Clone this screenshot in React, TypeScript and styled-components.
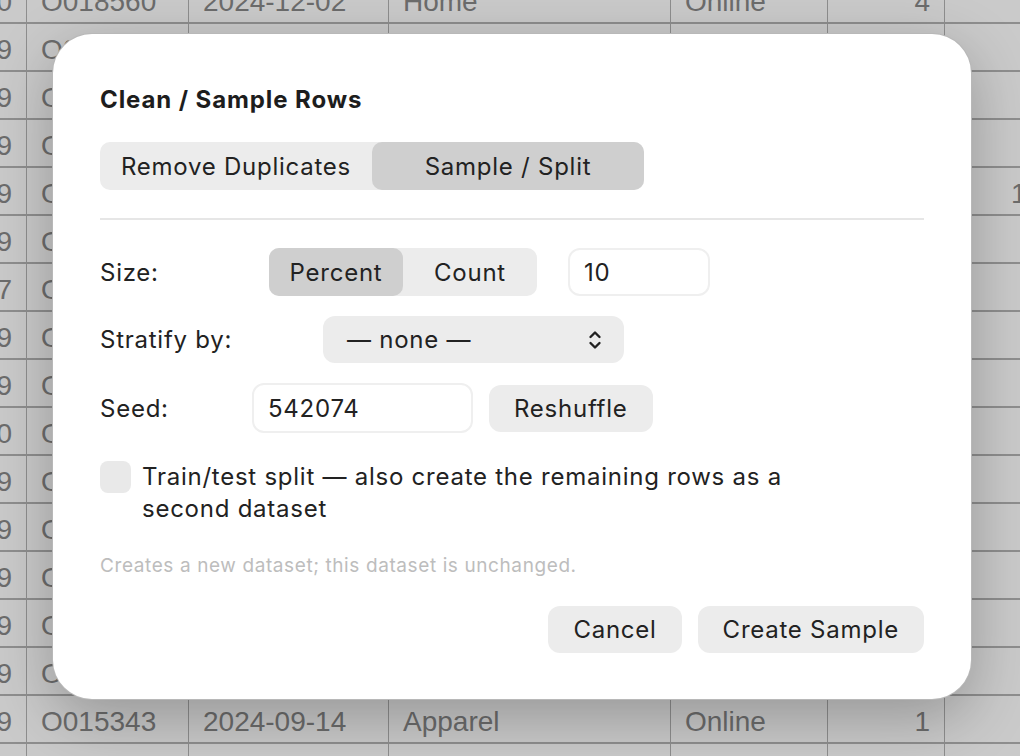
import React from "react";
import styled, { createGlobalStyle } from "styled-components";

const GlobalStyle = createGlobalStyle`
  html, body {
    margin: 0;
    padding: 0;
    height: 100%;
    overflow: hidden;
  }
  body {
    background: #cacaca;
    font-family: Inter, "Noto Sans", sans-serif;
    -webkit-font-smoothing: antialiased;
  }
`;

const Page = styled.div`
  position: relative;
  width: 1020px;
  height: 756px;
  overflow: hidden;
  background: #cacaca;
`;

/* spreadsheet behind the dialog */

const Sheet = styled.div`
  margin: -24px 0 0 -40px;
  font-family: "Liberation Sans", Arial, sans-serif;
  font-size: 28px;
  color: #6c6c6c;
`;

const SheetRow = styled.div`
  display: grid;
  grid-template-columns: 67px 162px 200px 282px 157px 117px 190px;
  height: 48px;
  box-sizing: border-box;
  border-bottom: 2px solid #8e8e8e;
`;

const Cell = styled.div<{ $right?: boolean }>`
  display: flex;
  align-items: center;
  justify-content: ${(p) => (p.$right ? "flex-end" : "flex-start")};
  padding: 5px 14px 0;
  border-right: 1px solid #8e8e8e;
  white-space: nowrap;
  overflow: hidden;
`;

/* dialog */

const Dialog = styled.div`
  position: absolute;
  left: 52px;
  top: 33px;
  width: 920px;
  box-sizing: border-box;
  padding: 52px 47px 46px;
  display: flex;
  flex-direction: column;
  gap: 28px;
  background: #fff;
  border: 1px solid rgba(0, 0, 0, 0.28);
  border-radius: 40px;
  box-shadow: 0 18px 60px rgba(0, 0, 0, 0.26);
  color: #222;
  font-size: 24px;
  letter-spacing: 0.75px;
`;

const Title = styled.h2`
  margin: 0;
  font-size: 24px;
  line-height: 28px;
  font-weight: 700;
  letter-spacing: 0.9px;
  color: #1d1d1d;
`;

const Segmented = styled.div<{ $width: number }>`
  display: grid;
  grid-auto-flow: column;
  grid-auto-columns: 1fr;
  width: ${(p) => p.$width}px;
  height: 48px;
  flex: none;
  background: #ececec;
  border-radius: 10px;
`;

const Segment = styled.div<{ $active?: boolean }>`
  display: flex;
  align-items: center;
  justify-content: center;
  border-radius: 10px;
  background: ${(p) => (p.$active ? "#cfcfcf" : "transparent")};
`;

const Divider = styled.div`
  height: 2px;
  background: #e6e6e6;
`;

const Fields = styled.div`
  display: flex;
  flex-direction: column;
  gap: 20px;
`;

const FieldRow = styled.div<{ $gap?: number }>`
  display: flex;
  align-items: center;
  gap: ${(p) => p.$gap ?? 0}px;
`;

const FieldLabel = styled.div<{ $width: number }>`
  width: ${(p) => p.$width}px;
  flex: none;
`;

const TextField = styled.div<{ $width: number; $height?: number }>`
  width: ${(p) => p.$width}px;
  height: ${(p) => p.$height ?? 48}px;
  box-sizing: border-box;
  display: flex;
  align-items: center;
  padding: 0 14px;
  background: #fff;
  border: 2px solid #efefef;
  border-radius: 12px;
`;

const Select = styled.div`
  width: 301px;
  height: 47px;
  box-sizing: border-box;
  display: flex;
  align-items: center;
  justify-content: space-between;
  padding: 0 22px 0 24px;
  background: #ececec;
  border-radius: 12px;
`;

const Button = styled.div`
  height: 47px;
  box-sizing: border-box;
  display: flex;
  align-items: center;
  padding: 0 25px;
  background: #ececec;
  border-radius: 12px;
`;

const CheckRow = styled.div`
  display: flex;
  align-items: flex-start;
  gap: 11px;
`;

const CheckBox = styled.div`
  width: 31px;
  height: 32px;
  flex: none;
  background: #e9e9e9;
  border-radius: 8px;
`;

const CheckText = styled.div`
  max-width: 660px;
  line-height: 32px;
`;

const Note = styled.div`
  font-size: 19px;
  line-height: 25px;
  letter-spacing: 0.6px;
  color: #bdbdbd;
`;

const Footer = styled.div`
  display: flex;
  justify-content: flex-end;
  gap: 16px;
`;

const Chevrons = () => (
  <svg width="14" height="22" viewBox="0 0 14 22" fill="none" stroke="#222" strokeWidth="2.4" strokeLinecap="round" strokeLinejoin="round">
    <path d="M2.5 8 L7 3.5 L11.5 8" />
    <path d="M2.5 14 L7 18.5 L11.5 14" />
  </svg>
);

const rows: string[][] = [
  ["4480", "O018560", "2024-12-02", "Home", "Online", "4", "39.90"],
  ["1129", "O016021", "2024-10-11", "Toys", "Retail", "2", "24.50"],
  ["3309", "O017744", "2024-11-19", "Beauty", "Online", "1", "18.75"],
  ["2689", "O014982", "2024-08-27", "Sports", "Wholesale", "6", "62.00"],
  ["5519", "O019203", "2024-12-18", "Electronics", "Online", "3", "1,249.00"],
  ["7039", "O013557", "2024-07-30", "Books", "Retail", "5", "45.20"],
  ["6217", "O015890", "2024-09-22", "Grocery", "Online", "8", "31.40"],
  ["9909", "O012436", "2024-07-05", "Apparel", "Retail", "2", "58.00"],
  ["8119", "O018017", "2024-11-26", "Home", "Online", "1", "89.99"],
  ["2470", "O016648", "2024-10-28", "Toys", "Wholesale", "4", "27.60"],
  ["4359", "O011975", "2024-06-14", "Beauty", "Online", "2", "33.10"],
  ["1799", "O017302", "2024-11-07", "Sports", "Retail", "3", "74.25"],
  ["6049", "O014420", "2024-08-09", "Electronics", "Online", "1", "299.00"],
  ["3589", "O019651", "2024-12-24", "Books", "Online", "7", "52.80"],
  ["7229", "O013084", "2024-07-17", "Grocery", "Retail", "5", "21.95"],
  ["5339", "O015343", "2024-09-14", "Apparel", "Online", "1", "64.00"],
  ["8812", "O016950", "2024-10-03", "Home", "Retail", "2", "47.30"],
];

const App = () => (
  <Page>
    <GlobalStyle />
    <Sheet>
      {rows.map((r, i) => (
        <SheetRow key={i}>
          <Cell $right>{r[0]}</Cell>
          <Cell>{r[1]}</Cell>
          <Cell>{r[2]}</Cell>
          <Cell>{r[3]}</Cell>
          <Cell>{r[4]}</Cell>
          <Cell $right>{r[5]}</Cell>
          <Cell $right>{r[6]}</Cell>
        </SheetRow>
      ))}
    </Sheet>

    <Dialog>
      <Title>Clean / Sample Rows</Title>

      <Segmented $width={544}>
        <Segment>Remove Duplicates</Segment>
        <Segment $active>Sample / Split</Segment>
      </Segmented>

      <Divider />

      <Fields>
        <FieldRow $gap={31}>
          <FieldLabel $width={169 - 31}>Size:</FieldLabel>
          <Segmented $width={268}>
            <Segment $active>Percent</Segment>
            <Segment>Count</Segment>
          </Segmented>
          <TextField $width={142}>10</TextField>
        </FieldRow>
        <FieldRow>
          <FieldLabel $width={223}>Stratify by:</FieldLabel>
          <Select>
            <span>— none —</span>
            <Chevrons />
          </Select>
        </FieldRow>
        <FieldRow $gap={16}>
          <FieldLabel $width={152 - 16}>Seed:</FieldLabel>
          <TextField $width={221} $height={50}>542074</TextField>
          <Button>Reshuffle</Button>
        </FieldRow>
      </Fields>

      <CheckRow>
        <CheckBox />
        <CheckText>Train/test split — also create the remaining rows as a second dataset</CheckText>
      </CheckRow>

      <Note>Creates a new dataset; this dataset is unchanged.</Note>

      <Footer>
        <Button>Cancel</Button>
        <Button>Create Sample</Button>
      </Footer>
    </Dialog>
  </Page>
);

export default App;
